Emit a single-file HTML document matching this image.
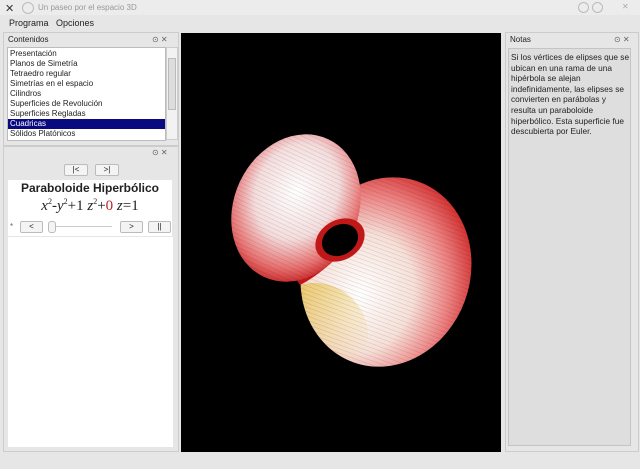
<!DOCTYPE html>
<html><head><style>
body{margin:0;width:640px;height:469px;background:#e6e6e6;font-family:"Liberation Sans",sans-serif;font-size:8px;color:#222;position:relative;overflow:hidden}
.a{position:absolute}
.btn{position:absolute;background:#f4f4f4;border:1px solid #bbb;border-radius:2px;text-align:center;font-size:8px;line-height:10px}
</style></head><body>
<div class="a" style="left:0;top:0;width:640px;height:15px;background:#ececec"></div>
<div class="a" style="left:5px;top:2px;font-size:11px;color:#333">✕</div>
<div class="a" style="left:22px;top:2px;width:10px;height:10px;border:1px solid #bbb;border-radius:6px"></div>
<div class="a" style="left:38px;top:3px;color:#999">Un paseo por el espacio 3D</div>
<div class="a" style="left:578px;top:2px;width:9px;height:9px;border:1px solid #bbb;border-radius:6px"></div>
<div class="a" style="left:592px;top:2px;width:9px;height:9px;border:1px solid #bbb;border-radius:6px"></div>
<div class="a" style="left:622px;top:2px;color:#aaa">✕</div>
<div class="a" style="left:9px;top:18px;font-size:9px">Programa</div>
<div class="a" style="left:56px;top:18px;font-size:9px">Opciones</div>

<div class="a" style="left:3px;top:32px;width:174px;height:112px;border:1px solid #ccc"></div>
<div class="a" style="left:8px;top:35px">Contenidos</div>
<div class="a" style="left:152px;top:35px;color:#666">⊙ ✕</div>
<div class="a" style="left:7px;top:47px;width:157px;height:91px;background:#fff;border:1px solid #bbb;line-height:10px;padding-top:1px">
<div style="padding-left:2px">Presentación</div>
<div style="padding-left:2px">Planos de Simetría</div>
<div style="padding-left:2px">Tetraedro regular</div>
<div style="padding-left:2px">Simetrías en el espacio</div>
<div style="padding-left:2px">Cilindros</div>
<div style="padding-left:2px">Superficies de Revolución</div>
<div style="padding-left:2px">Superficies Regladas</div>
<div style="padding-left:2px;background:#0a0a80;color:#fff">Cuadricas</div>
<div style="padding-left:2px">Sólidos Platónicos</div>
</div>
<div class="a" style="left:166px;top:47px;width:10px;height:91px;background:#f2f2f2;border:1px solid #ccc"></div>
<div class="a" style="left:168px;top:58px;width:6px;height:50px;background:#ddd;border:1px solid #bbb"></div>

<div class="a" style="left:3px;top:146px;width:174px;height:304px;border:1px solid #ccc"></div>
<div class="a" style="left:152px;top:148px;color:#666">⊙ ✕</div>
<div class="btn" style="left:64px;top:164px;width:22px;height:10px">|&lt;</div>
<div class="btn" style="left:95px;top:164px;width:22px;height:10px">&gt;|</div>
<div class="a" style="left:8px;top:180px;width:164px;height:56px;background:#fff"></div>
<div class="a" style="left:8px;top:181px;width:164px;text-align:center;font-weight:bold;font-size:12px">Paraboloide Hiperbólico</div>
<div class="a" style="left:8px;top:197px;width:164px;text-align:center;font-family:'Liberation Serif',serif;font-size:15px"><i>x</i><sup style="font-size:8px">2</sup>-<i>y</i><sup style="font-size:8px">2</sup>+1 <i>z</i><sup style="font-size:8px">2</sup>+<span style="color:#b22">0</span> <i>z</i>=1</div>
<div class="a" style="left:10px;top:222px;color:#666">*</div>
<div class="btn" style="left:20px;top:221px;width:21px;height:10px">&lt;</div>
<div class="a" style="left:48px;top:221px;width:6px;height:10px;border:1px solid #bbb;border-radius:3px;background:#f4f4f4"></div>
<div class="a" style="left:56px;top:226px;width:56px;height:1px;background:#ccc"></div>
<div class="btn" style="left:120px;top:221px;width:21px;height:10px">&gt;</div>
<div class="btn" style="left:148px;top:221px;width:21px;height:10px">||</div>
<div class="a" style="left:8px;top:237px;width:165px;height:210px;background:#fff"></div>

<div class="a" style="left:181px;top:33px;width:320px;height:419px;background:#000;overflow:hidden">
<svg width="320" height="419" viewBox="181 33 320 419">
<defs>
<radialGradient id="g1" cx="0.45" cy="0.4" r="0.65"><stop offset="0" stop-color="#fff"/><stop offset="0.5" stop-color="#f4dcdc"/><stop offset="0.8" stop-color="#e87070"/><stop offset="1" stop-color="#c01818"/></radialGradient>
<radialGradient id="g2" cx="0.4" cy="0.65" r="0.7"><stop offset="0" stop-color="#fff"/><stop offset="0.45" stop-color="#f6e0d8"/><stop offset="0.75" stop-color="#ec8080"/><stop offset="1" stop-color="#d02828"/></radialGradient>
<linearGradient id="y" x1="0" y1="0" x2="1" y2="0"><stop offset="0" stop-color="#e8c040" stop-opacity="0.7"/><stop offset="1" stop-color="#e8c040" stop-opacity="0"/></linearGradient>
<pattern id="p" width="4" height="4" patternUnits="userSpaceOnUse"><path d="M0 0H4" stroke="#000" stroke-opacity="0.25" stroke-width="0.6"/></pattern>
<clipPath id="c2"><ellipse cx="386" cy="272" rx="84" ry="96" transform="rotate(20 386 272)"/></clipPath>
</defs>
<ellipse cx="386" cy="272" rx="84" ry="96" transform="rotate(20 386 272)" fill="url(#g2)"/>
<g clip-path="url(#c2)"><ellipse cx="320" cy="330" rx="50" ry="45" transform="rotate(40 320 330)" fill="url(#y)"/></g>
<ellipse cx="386" cy="272" rx="84" ry="96" transform="rotate(20 386 272)" fill="url(#p)"/>
<path d="M330 200 Q360 215 345 250 Q320 275 300 285 L290 270 Z" fill="#c01818"/>
<ellipse cx="296" cy="208" rx="62" ry="76" transform="rotate(25 296 208)" fill="url(#g1)"/>
<ellipse cx="296" cy="208" rx="62" ry="76" transform="rotate(25 296 208)" fill="url(#p)"/>
<ellipse cx="340" cy="240" rx="26" ry="20" transform="rotate(-30 340 240)" fill="#c01818"/>
<ellipse cx="340" cy="240" rx="19" ry="15" transform="rotate(-30 340 240)" fill="#000"/>
</svg>
</div>

<div class="a" style="left:505px;top:32px;width:132px;height:418px;border:1px solid #ccc"></div>
<div class="a" style="left:510px;top:35px">Notas</div>
<div class="a" style="left:614px;top:35px;color:#666">⊙ ✕</div>
<div class="a" style="left:508px;top:48px;width:123px;height:398px;background:#dedede;border:1px solid #c4c4c4;padding:3px 0 0 2px;line-height:10.6px;font-size:8.3px;box-sizing:border-box;white-space:nowrap">Si los vértices de elipses que se<br>ubican en una rama de una<br>hipérbola se alejan<br>indefinidamente, las elipses se<br>convierten en parábolas y<br>resulta un paraboloide<br>hiperbólico. Esta superficie fue<br>descubierta por Euler.</div>
</body></html>
